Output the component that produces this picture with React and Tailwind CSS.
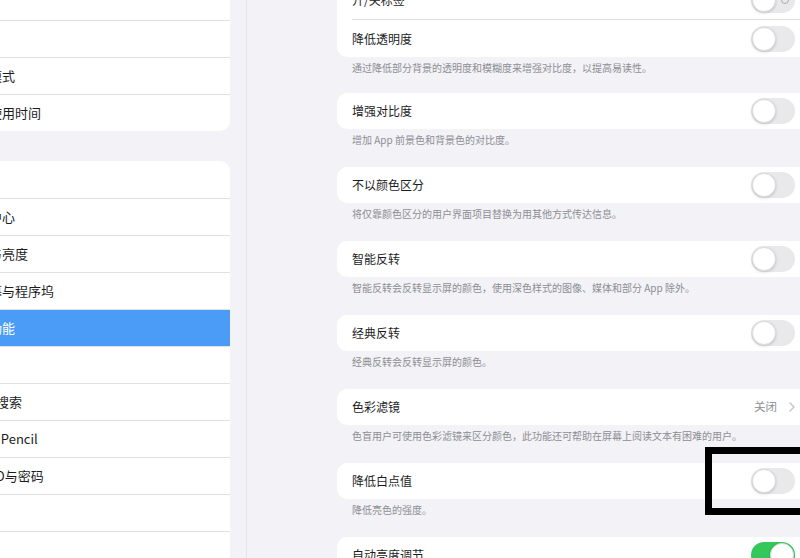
import React from 'react';

const sidebarTop = ['通知', '声音', '勿扰模式', '屏幕使用时间'];
const sidebarMain = [
  '通用', '控制中心', '显示与亮度', '主屏幕与程序坞', '辅助功能', '墙纸',
  'Siri与搜索', 'Apple Pencil', '触控 ID与密码', '电池', '隐私',
];

const settings = [
  { title: '增强对比度', note: '增加 App 前景色和背景色的对比度。' },
  { title: '不以颜色区分', note: '将仅靠颜色区分的用户界面项目替换为用其他方式传达信息。' },
  { title: '智能反转', note: '智能反转会反转显示屏的颜色，使用深色样式的图像、媒体和部分 App 除外。' },
  { title: '经典反转', note: '经典反转会反转显示屏的颜色。' },
  { title: '色彩滤镜', note: '色盲用户可使用色彩滤镜来区分颜色，此功能还可帮助在屏幕上阅读文本有困难的用户。', value: '关闭' },
  { title: '降低白点值', note: '降低亮色的强度。' },
  { title: '自动亮度调节', on: true },
];

const Toggle = ({ on, label }) => (
  <div className={`relative w-[44px] h-[26px] rounded-full shrink-0 ${on ? 'bg-[#34c759]' : 'bg-[#e9e9eb]'}`}>
    {label && !on && (
      <span className="absolute right-[6px] top-[9px] w-[8px] h-[8px] rounded-full border border-[#a9a9ae]" />
    )}
    <span
      className={`absolute top-[1px] w-[24px] h-[24px] rounded-full bg-white border border-[#dcdce0] shadow-[0_1px_3px_rgba(0,0,0,0.18)] ${on ? 'left-[19px]' : 'left-[1px]'}`}
    />
  </div>
);

const SideRow = ({ text, first, active }) => (
  <div
    className={`h-[37px] flex items-center overflow-hidden ${first ? '' : 'border-t border-[#e1e1e5]'} ${active ? 'bg-[#4a9cf7] text-white' : 'text-[#1c1c1e]'}`}
  >
    <span className="-ml-[37px] whitespace-nowrap text-[13px]">{text}</span>
  </div>
);

export default function App() {
  return (
    <div className="relative w-[800px] h-[558px] overflow-hidden flex bg-[#f2f2f7] font-['Noto_Sans_CJK_SC','Noto_Sans',sans-serif]">
      {/* sidebar */}
      <aside className="w-[247px] shrink-0 bg-[#f3f3f7] border-r border-[#e4e4e9]">
        <div className="w-[230px] -mt-[17px] bg-white rounded-r-[10px] overflow-hidden">
          {sidebarTop.map((t, i) => (
            <SideRow key={t} text={t} first={i === 0} />
          ))}
        </div>
        <div className="w-[230px] mt-[30px] bg-white rounded-r-[10px] overflow-hidden">
          {sidebarMain.map((t, i) => (
            <SideRow key={t} text={t} first={i === 0} active={t === '辅助功能'} />
          ))}
        </div>
      </aside>

      {/* detail */}
      <main className="flex-1 pl-[90px] overflow-hidden">
        <div className="-mt-[19px] bg-white rounded-l-[10px] pl-[15px]">
          <div className="h-[38px] flex items-center justify-between pr-[5px]">
            <span className="text-[12px] text-[#1c1c1e]">开/关标签</span>
            <Toggle label />
          </div>
          <div className="h-[38px] flex items-center justify-between pr-[5px] border-t border-[#e1e1e5]">
            <span className="text-[12px] text-[#1c1c1e]">降低透明度</span>
            <Toggle />
          </div>
        </div>
        <div className="h-[36px] pt-[5px] pl-[15px] text-[10px] leading-[12px] text-[#8e8e93] whitespace-nowrap">
          通过降低部分背景的透明度和模糊度来增强对比度，以提高易读性。
        </div>

        {settings.map((s) => (
          <div key={s.title}>
            <div className="h-[36px] bg-white rounded-l-[10px] pl-[15px] pr-[5px] flex items-center justify-between">
              <span className="text-[12px] text-[#1c1c1e]">{s.title}</span>
              {s.value ? (
                <span className="flex items-center gap-[12px] text-[11.5px] text-[#8e8e93]">
                  {s.value}
                  <svg width="6" height="10" viewBox="0 0 6 10" fill="none">
                    <path d="M1 1l4 4-4 4" stroke="#c4c4c8" strokeWidth="1.4" strokeLinecap="round" strokeLinejoin="round" />
                  </svg>
                </span>
              ) : (
                <Toggle on={s.on} />
              )}
            </div>
            {s.note && (
              <div className="h-[38px] pt-[5px] pl-[15px] text-[10px] leading-[12px] text-[#8e8e93] whitespace-nowrap">
                {s.note}
              </div>
            )}
          </div>
        ))}
      </main>

      {/* annotation box */}
      <div className="absolute left-[705px] top-[447px] w-[110px] h-[68px] border-[7px] border-black" />
    </div>
  );
}
